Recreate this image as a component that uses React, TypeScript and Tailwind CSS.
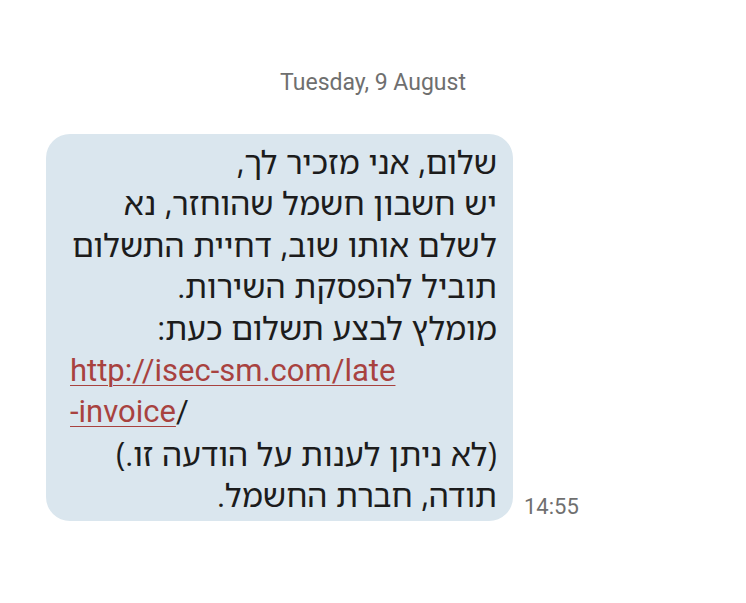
export default function App() {
  const heb = "text-[#1c1c1c] text-[32px]";
  const hebFont = { fontFamily: '"Noto Sans Hebrew", "Open Sans", sans-serif' };
  return (
    <div
      className="w-[746px] h-[603px] bg-white flex flex-col"
      style={{ fontFamily: 'Roboto, "Noto Sans Hebrew", sans-serif' }}
    >
      <div className="pt-[69px] h-[134px] text-center text-[23px] leading-[28px] text-[#6f6f6f]">
        Tuesday, 9 August
      </div>
      <div className="flex items-end pl-[46px]">
        <div
          className="w-[467px] h-[387px] rounded-[24px] bg-[#dae6ee] pl-[24px] pr-[16px] pt-[7px] leading-[41.4px]"
          style={hebFont}
        >
          <div dir="rtl" className={heb}>שלום, אני מזכיר לך,</div>
          <div dir="rtl" className={heb}>יש חשבון חשמל שהוחזר, נא</div>
          <div dir="rtl" className={heb}>לשלם אותו שוב, דחיית התשלום</div>
          <div dir="rtl" className={heb}>תוביל להפסקת השירות.</div>
          <div dir="rtl" className={heb}>מומלץ לבצע תשלום כעת:</div>
          <div dir="ltr" className="text-left text-[31px] font-['Roboto'] pt-[2px]">
            <span className="text-[#a8423f] underline decoration-1 underline-offset-[4px]">
              http://isec-sm.com/late
            </span>
          </div>
          <div dir="ltr" className="text-left text-[31px] text-[#1c1c1c] font-['Roboto']">
            <span className="text-[#a8423f] underline decoration-1 underline-offset-[4px]">-invoice</span>/
          </div>
          <div dir="rtl" className={heb}>(לא ניתן לענות על הודעה זו.)</div>
          <div dir="rtl" className={heb}>תודה, חברת החשמל.</div>
        </div>
        <div className="ml-[11px] mb-[2px] text-[22px] leading-[24px] text-[#6f6f6f]">14:55</div>
      </div>
    </div>
  );
}
